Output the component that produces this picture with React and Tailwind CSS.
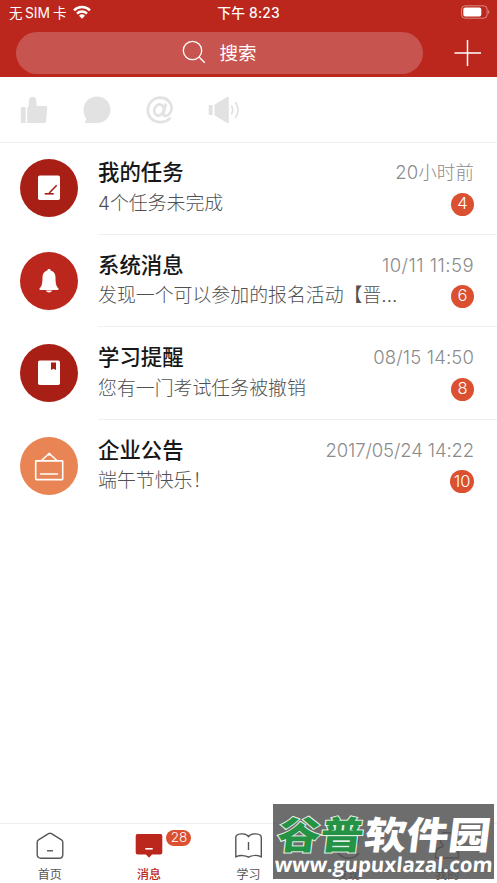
import React from 'react';

const messages = [
  {
    id: 'task',
    title: '我的任务',
    preview: '4个任务未完成',
    time: '20小时前',
    timeClass: 'tracking-[0.1px]',
    count: 4,
    color: 'bg-[#a81f16]',
    icon: TaskIcon,
  },
  {
    id: 'system',
    title: '系统消息',
    preview: '发现一个可以参加的报名活动【晋...',
    time: '10/11 11:59',
    timeClass: 'tracking-[0.48px]',
    count: 6,
    color: 'bg-[#bb271c]',
    icon: BellIcon,
  },
  {
    id: 'study',
    title: '学习提醒',
    preview: '您有一门考试任务被撤销',
    time: '08/15 14:50',
    timeClass: 'tracking-[0.15px]',
    count: 8,
    color: 'bg-[#a81f16]',
    icon: NotebookIcon,
  },
  {
    id: 'notice',
    title: '企业公告',
    preview: '端午节快乐！',
    time: '2017/05/24 14:22',
    timeClass: 'tracking-[-0.12px]',
    count: 10,
    color: 'bg-[#e98555]',
    icon: BoardIcon,
  },
];

const tabs = [
  { label: '首页', icon: HomeIcon },
  { label: '消息', icon: ChatIcon, active: true, badge: 28 },
  { label: '学习', icon: BookIcon },
  { label: '发现', icon: DiscoverIcon },
  { label: '我的', icon: MeIcon },
];

function TaskIcon() {
  return (
    <svg className="w-[58px] h-[58px]" viewBox="0 0 58 58" fill="none">
      <rect x="18" y="16.5" width="22" height="24.5" rx="1.8" fill="#fff" />
      <path d="M24.7 34.8h9" stroke="#a81f16" strokeWidth="1.6" />
      <path d="M29.2 34l7.5-7.8" stroke="#a81f16" strokeWidth="1.6" />
    </svg>
  );
}

function BellIcon() {
  return (
    <svg className="w-[58px] h-[58px]" viewBox="0 0 58 58" fill="#fff">
      <path d="M29 17c1.1 0 1.6.7 1.8 1.5 3.2 1 4.7 3.600 4.700 6.800 0 6.300.7 9 2.800 11 .7.8.3 1.700-.7 1.700H20.400c-1 0-1.400-.9-.7-1.700 2.100-2 2.800-4.700 2.800-11 0-3.200 1.500-5.800 4.700-6.800C27.400 17.700 27.900 17 29 17z" />
      <path d="M25.800 38.600h6.400c-.6 1.300-1.800 2-3.200 2s-2.600-.7-3.200-2z" />
    </svg>
  );
}

function NotebookIcon() {
  return (
    <svg className="w-[58px] h-[58px]" viewBox="0 0 58 58">
      <rect x="18" y="16.5" width="22" height="24.5" rx="1.8" fill="#fff" />
      <path d="M31 18.5h5v7.500l-2.500-1.300L31 26z" fill="#a81f16" />
    </svg>
  );
}

function BoardIcon() {
  return (
    <svg className="w-[58px] h-[58px]" viewBox="0 0 58 58" fill="none" stroke="#fff" strokeWidth="1.6">
      <rect x="15.7" y="23.9" width="27" height="18.7" rx=".5" />
      <path d="M21.5 23.5L29.2 16.5l7.7 7M20.5 37h17" strokeLinecap="round" />
      <circle cx="29.2" cy="17.2" r="1.5" fill="#fff" stroke="none" />
    </svg>
  );
}

function HomeIcon() {
  return (
    <svg className="w-7 h-7" viewBox="0 0 28 28" fill="none" stroke="currentColor" strokeWidth="1.4">
      <path d="M1.2 10.2Q1.2 8.6 2.5 7.8L12.5 1.6Q14 .8 15.5 1.6L25.5 7.8Q26.8 8.6 26.8 10.2V22.5Q26.8 26.3 23 26.3H5Q1.2 26.3 1.2 22.5z" />
      <path d="M11 18.8h6" />
    </svg>
  );
}

function ChatIcon() {
  return (
    <svg className="w-7 h-7" viewBox="0 0 28 28" fill="currentColor">
      <path d="M2.5 2h23A2 2 0 0 1 27.3 4v16.5a2 2 0 0 1-2 2H17L14 25.7 11 22.5H2.7a2 2 0 0 1-2-2V4a2 2 0 0 1 1.8-2z" />
      <path d="M10.3 16.8h7.400" stroke="#fff" strokeWidth="1.6" />
    </svg>
  );
}

function BookIcon() {
  return (
    <svg className="w-7 h-7" viewBox="0 0 28 28" fill="none" stroke="currentColor" strokeWidth="1.4">
      <path d="M13.5 4.5C11.5 1.5 4 1 1.7 3.3Q.8 4.2.8 5.5V24.800C5 23 10.500 23.200 13.500 25.200 16.500 23.200 22 23 26.300 24.800V5.500Q26.300 4.200 25.400 3.300C23 1 15.500 1.500 13.500 4.500zM13.500 10v8" />
    </svg>
  );
}

function DiscoverIcon() {
  return (
    <svg className="w-7 h-7" viewBox="0 0 28 28" fill="none" stroke="currentColor" strokeWidth="1.5">
      <path d="M24.500 5A13 13 0 1 0 25 21" />
      <path d="M24.500 5A13 13 0 0 1 14 19a5.500 5.500 0 1 1 4-9.500" />
    </svg>
  );
}

function MeIcon() {
  return (
    <svg className="w-7 h-7" viewBox="0 0 28 28" fill="none" stroke="currentColor" strokeWidth="1.5">
      <path d="M9.500 12.500a7 7 0 1 1 9 0c-1 1-.6 2 1 2.500 4 1 6 3.500 6 7V26H2.500v-4c0-3.500 2-6 6-7 1.600-.5 2-1.500 1-2.500z" />
    </svg>
  );
}

const StatusBar = () => (
  <div className="flex items-center h-[26px] pl-[9px] pr-[7px] text-white text-[13.5px]">
    <div className="flex flex-1 items-center">
      <span>无</span>
      <span className="ml-[2.5px] text-[13.8px]">SIM</span>
      <span className="ml-[3px]">卡</span>
      <svg className="ml-[6px] -mt-[2px] w-[18px] h-[14px]" viewBox="0 0 18 14" fill="none" stroke="#fff" strokeWidth="2.4">
        <path d="M1 5.3a11.3 11.3 0 0 1 16 0M4 8.6a7 7 0 0 1 10 0" />
        <path d="M9 13.7l-3-3a4.3 4.3 0 0 1 6 0z" fill="#fff" stroke="none" />
      </svg>
    </div>
    <div className="-ml-[2px] font-medium text-[13.8px] tracking-[0.2px] whitespace-pre">下午 8:23</div>
    <div className="flex flex-1 justify-end">
      <svg className="-mt-[2px] w-[29px] h-[14px]" viewBox="0 0 29 14" fill="none">
        <rect x=".6" y=".8" width="25.5" height="12.4" rx="3.5" stroke="#fff" strokeOpacity=".45" />
        <rect x="2.3" y="2.5" width="18" height="9" rx="2" fill="#fff" />
        <path d="M27.2 5v4c1.6-.6 1.6-3.4 0-4z" fill="#fff" fillOpacity=".5" />
      </svg>
    </div>
  </div>
);

const Header = () => (
  <header className="h-[77px] bg-[#bb271c]">
    <StatusBar />
    <div className="flex items-center px-4 pt-[6px]">
      <div className="flex items-center justify-center w-[407px] h-[42px] rounded-full bg-[#c7544f] text-white">
        <svg className="-mt-[2px] w-6 h-6" viewBox="0 0 24 24" fill="none" stroke="#fff" strokeWidth="1.3">
          <circle cx="10.5" cy="10.5" r="9.2" />
          <path d="M17 17l5.8 5.8" />
        </svg>
        <span className="ml-[13px] pt-[1px] text-[18.5px] leading-none">搜索</span>
      </div>
      <svg className="ml-auto w-[28px] h-[28px]" viewBox="0 0 28 28" stroke="#fff" strokeWidth="1.5">
        <path d="M14.5 1v26M1.5 14h26.5" />
      </svg>
    </div>
  </header>
);

const QuickActions = () => (
  <div className="flex items-center h-[66px] pl-[20px] pt-[1px] gap-[35px] text-[#e2e2e2] border-b border-[#f1f1f1]">
    <svg className="w-7 h-7" viewBox="0 0 28 28" fill="currentColor">
      <path d="M1.5 11H5a.7.7 0 0 1 .7.7V27H1.5a.7.7 0 0 1-.7-.7V11.7a.7.7 0 0 1 .7-.7zM7.2 12.200C8.300 11.300 9 10 9 4.500 9 2 10.500.8 12.500.8c2.600 0 4 2 4 4.500V10h9c1.200 0 1.900.8 1.800 2L26 25c-.2 1.400-1 2-2.200 2H7.200z" />
    </svg>
    <svg className="w-7 h-7" viewBox="0 0 28 28" fill="currentColor">
      <path d="M14 .5c7.5 0 13.500 5.900 13.500 13.200S21.500 27 14 27H2.500c-.8 0-1-.7-.5-1.200 1.200-1.200 1.600-2.200 1-3.300C1.400 20 .5 17 .5 13.700.5 6.400 6.500.5 14 .5z" />
    </svg>
    <svg className="w-7 h-7" viewBox="0 0 28 28" fill="none" stroke="currentColor" strokeWidth="2.7">
      <ellipse cx="13" cy="14" rx="4.6" ry="5.700" transform="rotate(20 13 14)" />
      <path d="M19.8 7.500l-2.200 9.800c-.4 2.300.7 2.900 2 2.700 3.200-.5 6-3.700 6-7.700C25.600 6 20.500 1.700 14.500 1.700 7.300 1.700 1.900 7.300 1.900 14.200c0 7 5.300 12 12.300 12 4.500 0 8-1.800 10.300-4.500" />
    </svg>
    <svg className="-ml-[1px] w-8 h-7" viewBox="0 0 32 28" fill="currentColor">
      <rect x=".7" y="9" width="4" height="10" rx=".8" />
      <path d="M6.5 8.7L18.500 1.200c1.300-.8 2.300-.3 2.300 1V25.800c0 1.300-1 1.800-2.300 1L6.500 19.300z" />
      <path d="M23.300 9.500q3 4.500 0 9M27.300 6q5.500 8 0 16" fill="none" stroke="currentColor" strokeWidth="1.7" />
    </svg>
  </div>
);

const MessageRow = ({ item }) => {
  const Icon = item.icon;

  return (
    <li className="group flex h-[92.6px] pl-[20px]">
      <div className={`mt-[17px] w-[58px] h-[58px] shrink-0 rounded-full ${item.color}`}>
        <Icon />
      </div>
      <div className="flex flex-1 min-w-0 flex-col ml-[20px] pt-[17px] pr-[23px] border-b border-[#efefef] group-last:border-transparent">
        <div className="flex h-[27px] items-center justify-between">
          <span className="pt-[1px] text-[21.4px] font-medium leading-none text-[#171717]">{item.title}</span>
          <span className={`text-[18.5px] font-light leading-none text-[#8b8b8b] ${item.timeClass}`}>{item.time}</span>
        </div>
        <div className="flex h-[34px] items-center justify-between">
          <span className="pt-[2px] text-[18.9px] font-light leading-none text-[#505050] whitespace-nowrap">{item.preview}</span>
          <span className="flex items-center justify-center min-w-[23px] h-[23px] mt-[2px] px-[3.5px] pb-[2px] rounded-full bg-[#da5030] text-white text-[16.5px] font-light leading-none">
            {item.count}
          </span>
        </div>
      </div>
    </li>
  );
};

const TabBar = () => (
  <nav className="flex h-[60px] border-t border-[#eee]">
    {tabs.map(({ label, icon: Icon, active, badge }) => (
      <div
        key={label}
        className={`relative flex flex-1 flex-col items-center pt-[8px] ${active ? 'text-[#bb271c]' : 'text-[#555]'}`}
      >
        <Icon />
        <span className={`mt-[8px] text-[12px] leading-[14px] ${active ? 'font-medium' : ''}`}>{label}</span>
        {badge && (
          <span className="absolute left-[67px] top-[6px] flex items-center justify-center w-[25px] h-[16px] rounded-full bg-[#da5030] text-white text-[13.5px] font-light leading-none">
            {badge}
          </span>
        )}
      </div>
    ))}
  </nav>
);

const SiteBanner = () => (
  <div className="absolute left-[273px] top-[804px] w-[221px] h-[75px] bg-[#535353]/85">
    <svg className="w-[221px] h-[75px]" viewBox="0 0 221 75">
      <g transform="translate(5 45) skewX(-7)" fontFamily="'Noto Sans CJK SC', sans-serif" fontSize="38" fontWeight="900">
        <text x="-2" y="0" textLength="86" lengthAdjust="spacingAndGlyphs" fill="#259346" stroke="#e5f1e7" strokeWidth="2" paintOrder="stroke">谷普</text>
        <text x="85" y="0" textLength="126" lengthAdjust="spacingAndGlyphs" fill="#fff">软件园</text>
      </g>
      <g transform="translate(0 68) skewX(-5)">
        <text x="1" y="0" textLength="218" lengthAdjust="spacingAndGlyphs" fontFamily="'Open Sans', sans-serif" fontSize="20.5" fontWeight="700" fill="#fff">www.gupuxlazal.com</text>
      </g>
    </svg>
  </div>
);

export default function App() {
  return (
    <div className="relative flex flex-col w-[497px] h-[883px] overflow-hidden bg-white font-[Inter,'Noto_Sans_CJK_SC',sans-serif]">
      <Header />
      <QuickActions />
      <ul className="flex-1 -mt-px">
        {messages.map((item) => (
          <MessageRow key={item.id} item={item} />
        ))}
      </ul>
      <TabBar />
      <SiteBanner />
    </div>
  );
}
